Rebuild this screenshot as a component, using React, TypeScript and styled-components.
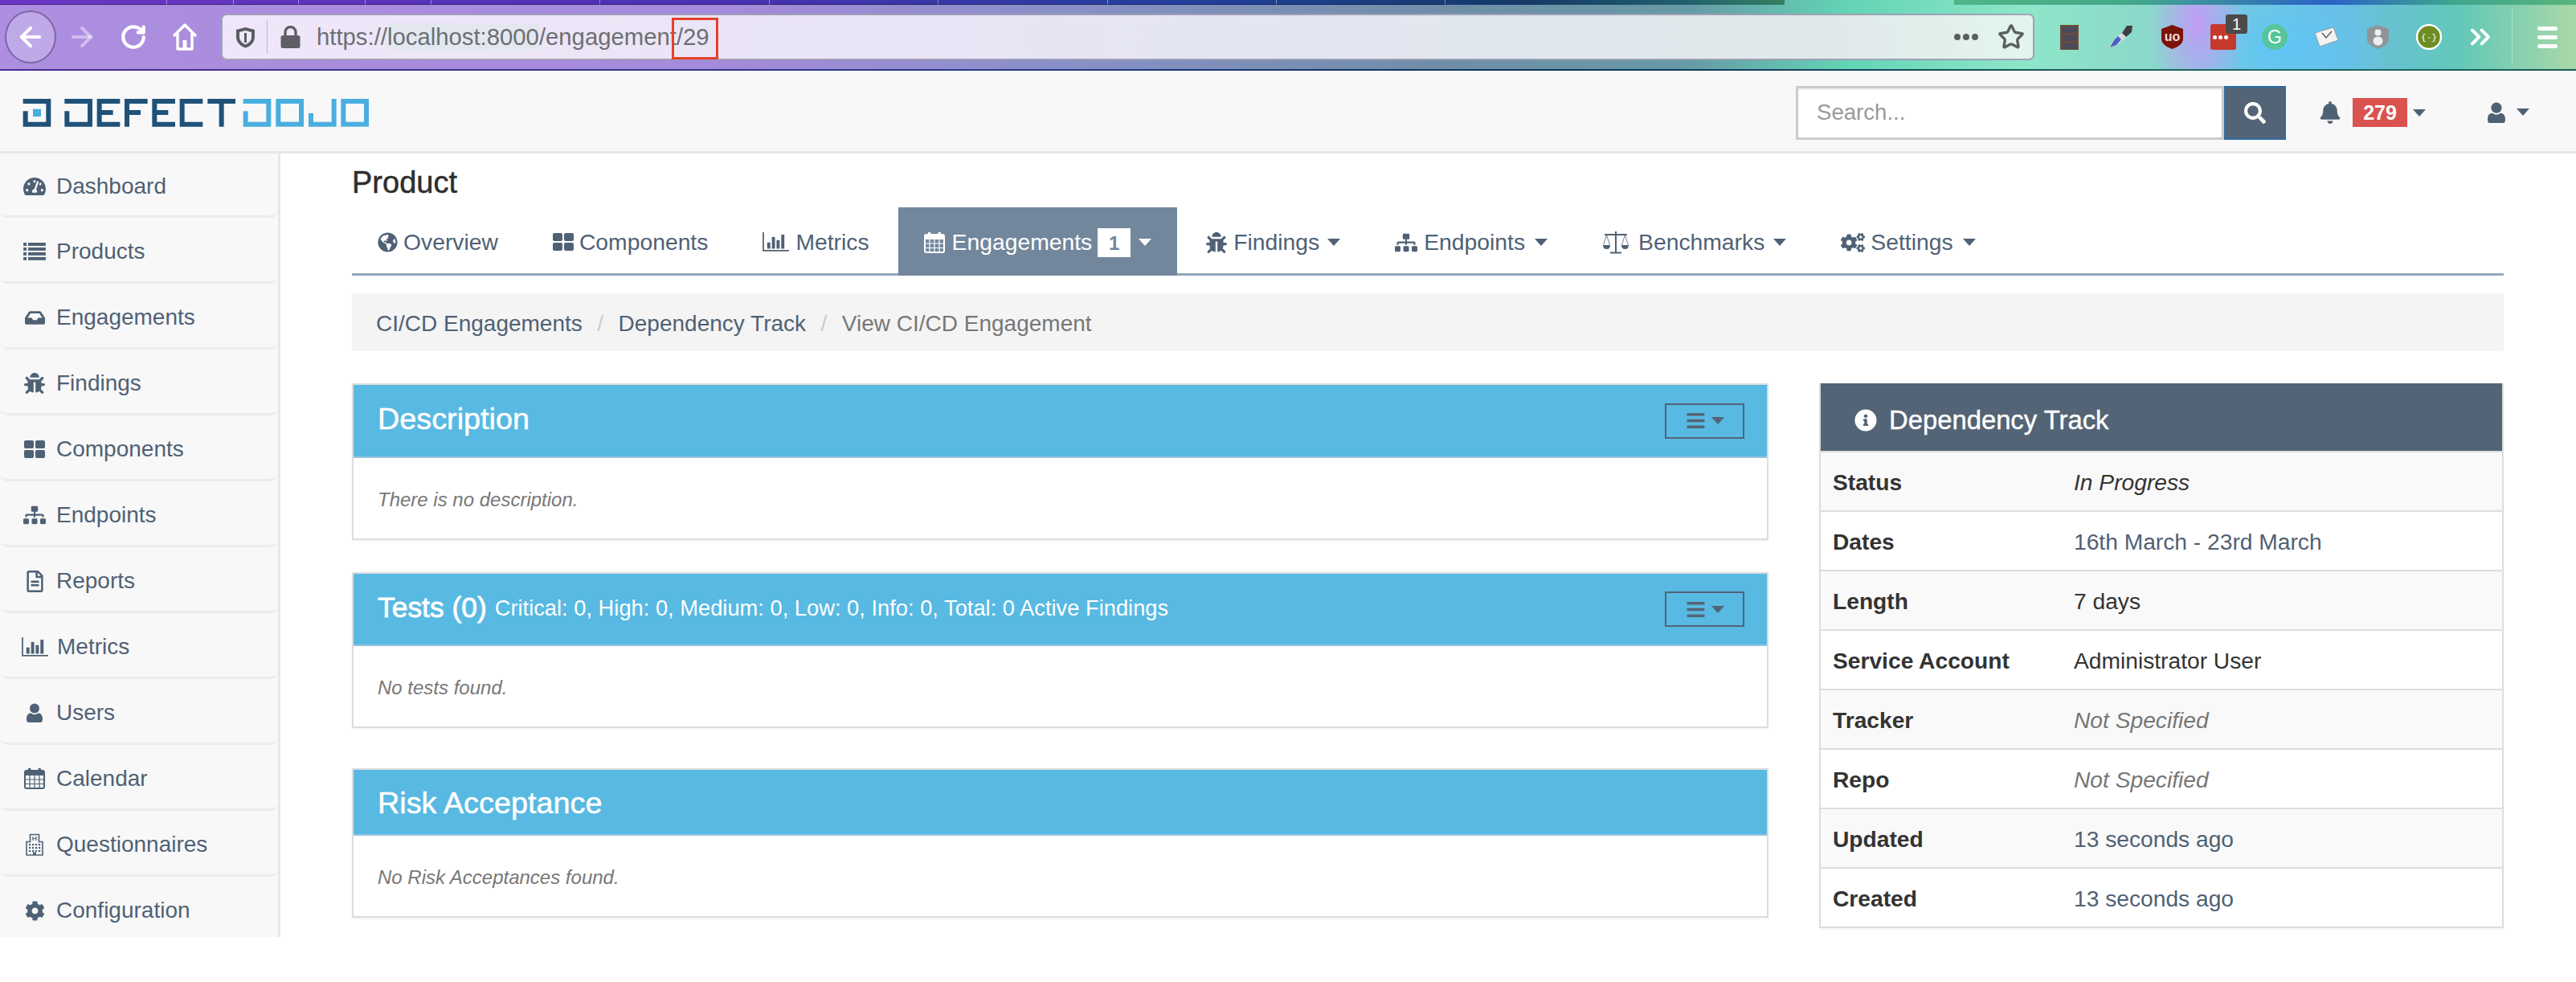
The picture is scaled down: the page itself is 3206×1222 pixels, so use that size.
import React from "react";
import styled, { createGlobalStyle } from "styled-components";
import { ArrowLeft, ArrowRight, RotateCw, Star, ChevronsRight } from "lucide-react";
import {
  FaTachometerAlt, FaInbox, FaBug, FaSitemap, FaRegFileAlt, FaCog, FaCogs,
  FaGlobeAmericas, FaInfoCircle, FaBars, FaBell, FaSearch,
} from "react-icons/fa";

const INK = "#4f6175";

const Global = createGlobalStyle`
  html, body { margin: 0; padding: 0; background: #fff; overflow: hidden; }
  body { font-family: "Liberation Sans", Arial, sans-serif; color: #333; }
  * { box-sizing: border-box; }
`;

/* ---------- drawn icons ---------- */
type P = { size?: number };
const ListIcon = ({ size = 28 }: P) => (
  <svg width={size} height={size * 0.78} viewBox="0 0 28 22" fill="currentColor">
    {[0, 6, 12, 18].map((y) => (
      <g key={y}><rect x="0" y={y} width="4" height="4" /><rect x="6" y={y} width="22" height="4" /></g>
    ))}
  </svg>
);
const ThLargeIcon = ({ size = 26 }: P) => (
  <svg width={size} height={size * 0.85} viewBox="0 0 26 22" fill="currentColor">
    <rect x="0" y="0" width="12" height="10" rx="2" /><rect x="14" y="0" width="12" height="10" rx="2" />
    <rect x="0" y="12" width="12" height="10" rx="2" /><rect x="14" y="12" width="12" height="10" rx="2" />
  </svg>
);
const BarChartIcon = ({ size = 33 }: P) => (
  <svg width={size} height={size * 0.74} viewBox="0 0 34 25" fill="currentColor">
    <path d="M1 0V23.5H34" fill="none" stroke="currentColor" strokeWidth="1.8" />
    <rect x="6" y="13" width="4" height="8" /><rect x="12" y="6" width="4" height="15" />
    <rect x="18" y="10" width="4" height="11" /><rect x="24" y="3" width="4" height="18" />
  </svg>
);
const CalendarIcon = ({ size = 26 }: P) => (
  <svg width={size} height={size * 1.04} viewBox="0 0 26 27" fill="currentColor">
    <rect x="1" y="4" width="24" height="22" rx="2" fill="none" stroke="currentColor" strokeWidth="2" />
    <rect x="1" y="4" width="24" height="6" />
    <path d="M7 10V26M13 10V26M19 10V26M1 15H25M1 20.5H25" stroke="currentColor" strokeWidth="1.2" />
    <rect x="5" y="0.5" width="3.4" height="7" rx="1.7" /><rect x="17.6" y="0.5" width="3.4" height="7" rx="1.7" />
  </svg>
);
const UserIcon = ({ size = 20 }: P) => (
  <svg width={size} height={size * 1.2} viewBox="0 0 20 24" fill="currentColor">
    <circle cx="10" cy="6.5" r="6" />
    <path d="M0 20C0 15 2 12.5 5.5 12.5Q10 16 14.5 12.5C18 12.5 20 15 20 20Q20 24 17 24H3Q0 24 0 20Z" />
  </svg>
);
const BuildingIcon = ({ size = 22 }: P) => (
  <svg width={size} height={size * 1.27} viewBox="0 0 22 28" fill="currentColor">
    <path d="M1 10.5H5.5V1.5H16.5V10.5H21V27H1Z" fill="none" stroke="currentColor" strokeWidth="1.6" />
    <path d="M9 4V9M13 4V9M9 6.5H13" stroke="currentColor" strokeWidth="1.2" fill="none" />
    {[4, 8, 12, 16].map((x) => [13, 17, 21].map((y) => <rect key={`${x}${y}`} x={x} y={y} width="2.2" height="2.2" />))}
    <rect x="9" y="23.5" width="4" height="3.5" />
  </svg>
);
const ScaleIcon = ({ size = 34 }: P) => (
  <svg width={size} height={size * 0.85} viewBox="0 0 34 29" fill="currentColor">
    <path d="M17 1V27M10 27.5H24M3 5H31" stroke="currentColor" strokeWidth="2" fill="none" />
    <path d="M5.5 5.5L1.5 18M5.5 5.5L9.5 18M28.5 5.5L24.5 18M28.5 5.5L32.5 18" stroke="currentColor" strokeWidth="0.8" fill="none" />
    <path d="M1 18H10Q10 23 5.5 23T1 18ZM24 18H33Q33 23 28.5 23T24 18Z" />
  </svg>
);
const HomeIcon = () => (
  <svg width="32" height="34" viewBox="0 0 32 34" fill="none" stroke="#fff" strokeWidth="3.4" strokeLinejoin="round">
    <path d="M2 16L16 2L30 16M7 12V32H25V12" />
    <rect x="13.5" y="21" width="5" height="11" fill="#fff" stroke="none" />
  </svg>
);
const ShieldIcon = () => (
  <svg width="25" height="27" viewBox="0 0 25 27">
    <path d="M12.5 1L24 4V13C24 20 18 25 12.5 26.5C7 25 1 20 1 13V4Z" fill="#5b5b62" />
    <path d="M12.5 5L20 7V13C20 18 16 21 12.5 22.5C9 21 5 18 5 13V7Z" fill="#eee8f8" />
    <rect x="11" y="8" width="3" height="12" fill="#5b5b62" />
  </svg>
);
const LockIcon = () => (
  <svg width="25" height="28" viewBox="0 0 25 28">
    <path d="M6 13V8A6.5 6.5 0 0 1 19 8V13" fill="none" stroke="#5f5d66" strokeWidth="3.4" />
    <rect x="0.5" y="12" width="24" height="16" rx="2.5" fill="#5f5d66" />
  </svg>
);
const ChocolateExt = () => (
  <svg width="23" height="31" viewBox="0 0 23 31">
    <rect width="23" height="31" fill="#6f4d2c" />
    {[0, 1].map((c) => [0, 1, 2].map((r) => (
      <rect key={`${c}${r}`} x={2 + c * 10} y={2 + r * 10} width="9" height="8" fill="#4c4a59" />
    )))}
  </svg>
);
const DropperExt = () => (
  <svg width="32" height="30" viewBox="0 0 32 30">
    <path d="M2 29L7 19L21 7L26 13L12 25Z" fill="#d8dadf" />
    <path d="M3 28L8 19L13 14L17 18L11 25Z" fill="#4b62c4" />
    <path d="M18 10L24 1H31L30 9L23 15Z" fill="#3f3f3f" />
  </svg>
);
const UblockExt = () => (
  <svg width="27" height="30" viewBox="0 0 27 30">
    <path d="M13.5 0L27 5V17C27 24 20 27.5 13.5 30C7 27.5 0 24 0 17V5Z" fill="#7b130b" />
    <text x="13.5" y="20" textAnchor="middle" fontSize="16" fontWeight="700" fontFamily="Liberation Sans, sans-serif" fill="#f1dcd6">uo</text>
  </svg>
);
const GrammarlyExt = () => (
  <svg width="32" height="32" viewBox="0 0 32 32">
    <circle cx="16" cy="16" r="16" fill="#57c59b" />
    <text x="16" y="24" textAnchor="middle" fontSize="23" fontFamily="Liberation Sans, sans-serif" fill="#fff">G</text>
  </svg>
);
const CardExt = () => (
  <svg width="32" height="26" viewBox="0 0 32 26">
    <path d="M2 8L25 1L31 17L8 25Z" fill="#f3f3f3" stroke="#8a8a8a" strokeWidth="0.8" />
    <path d="M11 8L16 14L23 6" fill="none" stroke="#555" strokeWidth="1.4" />
  </svg>
);
const GhostExt = () => (
  <svg width="27" height="30" viewBox="0 0 27 30">
    <path d="M13.5 0L27 5V18C27 24 20 27.5 13.5 30C7 27.5 0 24 0 18V5Z" fill="#8f9698" />
    <circle cx="13.5" cy="9.5" r="4" fill="#eee" />
    <ellipse cx="13.5" cy="20" rx="6" ry="5.5" fill="#eee" />
  </svg>
);
const GreenExt = () => (
  <svg width="32" height="32" viewBox="0 0 32 32">
    <circle cx="16" cy="16" r="15" fill="#6e8e22" stroke="#fff" strokeWidth="2.4" />
    <text x="16" y="20" textAnchor="middle" fontSize="11" fontFamily="Liberation Mono, monospace" fill="#fff">{"{·}"}</text>
  </svg>
);

/* ---------- browser chrome ---------- */
const Chrome = styled.header`
  height: 88px;
  position: relative;
  background:
    radial-gradient(ellipse 60px 110px at 2735px 30px, rgba(195, 155, 248, 0.98), transparent),
    radial-gradient(ellipse 130px 90px at 2840px 60px, #5fc6f6, transparent),
    linear-gradient(90deg, #ad8ee0 0, #a58adb 900px, #8a90c8 1300px, #6f8ea8 1800px, #669aa6 2100px, #63d4b6 2300px, #8ee6c8 2520px, #8ad8cc 2680px, #6cbde6 2900px, #63c8b8 3060px, #a9d8a8 3206px);
  border-bottom: 2px solid;
  border-image: linear-gradient(90deg, #4a2b96, #273a8c 1200px, #0f3658 1900px, #16465a 2300px, #1e6a62 2800px, #1c5a5a 3206px) 1;
`;
const TabStrip = styled.div`
  display: flex;
  height: 6px;
  background: linear-gradient(90deg, #6d36c6 0, #4a31b0 900px, #20409a 1500px, #153a66 1900px, #22606e 2100px, #36805f 2221px, transparent 2221px, transparent 2432px, #4fb587 2432px, #45a88a 2650px, #2a62c8 2900px, #3fa58f 3050px, #58b47c 3206px);
`;
const TabSliver = styled.div<{ $w: number }>`
  flex: 0 0 ${(p) => p.$w}px;
  border-right: 1px solid rgba(255, 255, 255, 0.4);
  border-bottom: 1px solid rgba(10, 10, 50, 0.45);
`;
const ToolRow = styled.div`
  display: flex;
  align-items: center;
  height: 80px;
  padding: 0 0 0 6px;
`;
const NavCell = styled.div<{ $circle?: boolean; $dim?: boolean }>`
  flex: 0 0 64px;
  height: 66px;
  display: flex;
  align-items: center;
  justify-content: center;
  color: ${(p) => (p.$dim ? "rgba(255,255,255,.42)" : "#fff")};
  ${(p) => p.$circle && "border-radius: 50%; background: rgba(255,255,255,.24); border: 2px solid rgba(70,50,120,.55);"}
`;
const AddressBar = styled.div`
  margin-left: 13px;
  flex: 0 0 2257px;
  height: 58px;
  display: flex;
  align-items: center;
  border: 2px solid rgba(60, 60, 100, 0.42);
  border-radius: 7px;
  background: linear-gradient(90deg, #efe7f9 0, #e8e4f5 900px, #e2e7f0 1500px, #e0e9ea 2000px, #e3f5ee 2257px);
  padding-left: 16px;
  color: #5b5b62;
`;
const BarDivider = styled.span`
  width: 1px;
  height: 42px;
  background: rgba(90, 90, 100, 0.35);
  margin: 0 16px 0 14px;
`;
const Url = styled.span`
  margin-left: 20px;
  font-size: 29.3px;
  color: #6e6e72;
  white-space: nowrap;
`;
const UrlHost = styled.span`
  background: #e3e8f0;
`;
const UrlMarked = styled.span`
  position: relative;
  &::after {
    content: "";
    position: absolute;
    left: -6px;
    right: -11px;
    top: -7px;
    bottom: -12px;
    border: 3px solid #e6402a;
  }
`;
const BarEnd = styled.div`
  margin-left: auto;
  display: flex;
  align-items: center;
  gap: 24px;
  padding-right: 10px;
  color: #5b5f5e;
`;
const MoreDots = styled.span`
  display: flex;
  gap: 3px;
  & > i { width: 8px; height: 8px; border-radius: 50%; background: #5b5f5e; display: block; }
`;
const ExtRow = styled.div`
  margin-left: 11px;
  display: flex;
  align-items: center;
`;
const ExtCell = styled.div`
  position: relative;
  flex: 0 0 64px;
  display: flex;
  justify-content: center;
  align-items: center;
  height: 66px;
  color: #fff;
`;
const PassIcon = styled.div`
  width: 32px;
  height: 32px;
  border-radius: 3px;
  background: #c6392d;
  display: flex;
  align-items: center;
  gap: 2px;
  padding: 0 3px;
  & > i { display: block; width: 5px; height: 5px; border-radius: 50%; background: #fff; }
`;
const ExtBadge = styled.span`
  position: absolute;
  top: 5px;
  left: 35px;
  width: 27px;
  height: 24px;
  background: #4b4b4b;
  border-radius: 3px;
  color: #fff;
  font-size: 20px;
  line-height: 24px;
  text-align: center;
`;
const ChromeDivider = styled.span`
  margin-left: 7px;
  width: 1px;
  height: 68px;
  background: rgba(255, 255, 255, 0.35);
`;
const MenuBars = styled.div`
  margin-left: 31px;
  width: 25px;
  display: flex;
  flex-direction: column;
  gap: 6px;
  & > i { display: block; height: 5px; border-radius: 3px; background: #fff; }
`;

/* ---------- app navbar ---------- */
const TopNav = styled.nav`
  height: 103px;
  display: flex;
  align-items: center;
  padding: 4px 0 0 20px;
  background: #f8f8f8;
  border-bottom: 3px solid #e7e7e7;
`;
const Logo = styled.svg`
  width: 450px;
  height: 50px;
  display: block;
`;
const SearchGroup = styled.div`
  margin-left: auto;
  display: flex;
  height: 67px;
`;
const SearchInput = styled.input`
  width: 533px;
  height: 67px;
  border: 3px solid #ccc;
  border-radius: 0;
  background: #fff;
  padding: 0 23px;
  font: 400 27.6px "Liberation Sans", Arial, sans-serif;
  box-shadow: inset 0 2px 2px rgba(0, 0, 0, 0.07);
  &::placeholder { color: #999; opacity: 1; }
`;
const SearchButton = styled.button`
  width: 77px;
  height: 67px;
  border: 2px solid #2e6da4;
  background: #536476;
  color: #fff;
  display: flex;
  align-items: center;
  justify-content: center;
  padding: 0;
`;
const BellGroup = styled.div`
  margin-left: 41px;
  display: flex;
  align-items: center;
  color: ${INK};
`;
const CountBadge = styled.span`
  margin-left: 14px;
  width: 68px;
  height: 36px;
  background: #d9534f;
  color: #fff;
  font-size: 25px;
  font-weight: 700;
  line-height: 36px;
  text-align: center;
`;
const Caret = styled.span<{ $light?: boolean; $gap?: number }>`
  display: inline-block;
  margin-left: ${(p) => p.$gap ?? 10}px;
  width: 0;
  height: 0;
  border-left: 8px solid transparent;
  border-right: 8px solid transparent;
  border-top: 9px solid ${(p) => (p.$light ? "#fff" : INK)};
`;
const UserGroup = styled.div`
  margin: 0 58px 0 77px;
  display: flex;
  align-items: center;
  color: ${INK};
`;

/* ---------- sidebar ---------- */
const Body = styled.div`
  display: flex;
  align-items: flex-start;
`;
const Sidebar = styled.aside`
  flex: 0 0 349px;
  height: 975px;
  overflow: hidden;
  background: #f8f8f8;
  border-right: 3px solid #e7e7e7;
`;
const SideRow = styled.div`
  height: 82px;
  display: flex;
  align-items: center;
  padding: 5px 0 0 27px;
  border-bottom: 3px solid #ececec;
  border-radius: 0 0 9px 9px;
  color: ${INK};
  font-size: 28px;
  &:first-child { height: 80px; }
`;
const SideIcon = styled.span`
  flex: 0 0 32px;
  display: flex;
  justify-content: center;
  margin-right: 11px;
`;

/* ---------- main ---------- */
const Main = styled.main`
  flex: 1;
  min-width: 0;
  padding: 0 90px 0 89px;
`;
const PageTitle = styled.h3`
  margin: 0;
  height: 67px;
  font-size: 38px;
  font-weight: 400;
  line-height: 72px;
  color: #2e2e2e;
  -webkit-text-stroke: 0.5px #2e2e2e;
`;
const Tabs = styled.div`
  height: 85px;
  display: flex;
  border-bottom: 3px solid #94a8b8;
`;
const Tab = styled.div<{ $active?: boolean }>`
  display: flex;
  align-items: center;
  height: 85px;
  padding: 2px 32px 0;
  margin-right: 4px;
  font-size: 28.3px;
  white-space: nowrap;
  color: ${(p) => (p.$active ? "#fff" : INK)};
  background: ${(p) => (p.$active ? "#73879c" : "transparent")};
`;
const TabIcon = styled.span<{ $w: number }>`
  flex: 0 0 ${(p) => p.$w}px;
  margin-right: 7px;
  display: flex;
  align-items: center;
`;
const TabCount = styled.span`
  margin-left: 7px;
  width: 41px;
  height: 36px;
  background: #fff;
  color: #73879c;
  font-size: 24px;
  font-weight: 700;
  line-height: 38px;
  text-align: center;
`;
const Breadcrumb = styled.div`
  margin-top: 22px;
  height: 72px;
  display: flex;
  align-items: center;
  padding: 3px 30px 0;
  background: #f4f4f4;
  font-size: 28px;
  color: ${INK};
`;
const CrumbSep = styled.span`
  color: #ccc;
  padding: 0 18.5px;
`;
const CrumbCurrent = styled.span`
  color: #777;
`;
const Columns = styled.div`
  margin-top: 40px;
  display: grid;
  grid-template-columns: 1763px 852px;
  column-gap: 63px;
  align-items: start;
`;
const Stack = styled.div`
  display: flex;
  flex-direction: column;
`;
const Panel = styled.section<{ $gap?: number }>`
  margin-bottom: ${(p) => p.$gap ?? 40}px;
  border: 2px solid #ddd;
  box-shadow: 0 2px 2px rgba(0, 0, 0, 0.04);
`;
const PanelHead = styled.div<{ $h: number; $pb?: number; $pt?: number }>`
  height: ${(p) => p.$h}px;
  display: flex;
  align-items: center;
  padding: ${(p) => p.$pt ?? 0}px 28px ${(p) => p.$pb ?? 0}px 30px;
  background: #58b9e2;
  border-bottom: 2px solid #9bc3de;
  color: #fff;
`;
const PanelTitle = styled.h4<{ $compact?: boolean }>`
  margin: 0;
  font-size: ${(p) => (p.$compact ? 35.4 : 37.8)}px;
  font-weight: 400;
  -webkit-text-stroke: ${(p) => (p.$compact ? 0.8 : 0.5)}px #fff;
`;
const PanelNote = styled.span`
  margin-left: 10px;
  font-size: 27.3px;
`;
const MenuButton = styled.div`
  width: 99px;
  height: 44px;
  display: flex;
  align-items: center;
  justify-content: center;
  border: 2px solid #536476;
  color: #536476;
`;
const MenuSlot = styled.div<{ $up: number }>`
  margin-left: auto;
  display: flex;
  margin-top: ${(p) => p.$up}px;
`;
const PanelBody = styled.div`
  height: 100px;
  display: flex;
  align-items: center;
  padding: 3px 30px 0;
  font-size: 24px;
  font-style: italic;
  color: #777;
  background: #fff;
`;
const InfoPanel = styled.section`
  border: 2px solid #ddd;
  border-top: none;
  box-shadow: 0 2px 2px rgba(0, 0, 0, 0.04);
`;
const InfoHead = styled.h4`
  margin: 0;
  height: 84px;
  display: flex;
  align-items: center;
  gap: 15px;
  padding: 8px 0 0 42px;
  background: #536476;
  color: #fff;
  font-size: 32.8px;
  font-weight: 400;
  -webkit-text-stroke: 0.4px #fff;
`;
const InfoRow = styled.div`
  height: 74px;
  display: flex;
  align-items: center;
  padding: 3px 0 0 15px;
  font-size: 28.2px;
  border-top: 2px solid #ddd;
  &:nth-of-type(odd) { background: #f9f9f9; }
  &:nth-of-type(even) { background: #fff; }
`;
const InfoLabel = styled.strong`
  flex: 0 0 300px;
  color: #333;
`;
const InfoValue = styled.span<{ $tone?: "link" | "muted" | "plain"; $em?: boolean }>`
  color: ${(p) => (p.$tone === "link" ? INK : p.$tone === "muted" ? "#777" : "#333")};
  font-style: ${(p) => (p.$em ? "italic" : "normal")};
`;

/* ---------- data ---------- */
const sideItems: [React.ReactNode, string][] = [
  [<FaTachometerAlt size={28} />, "Dashboard"],
  [<ListIcon />, "Products"],
  [<FaInbox size={25} />, "Engagements"],
  [<FaBug size={26} />, "Findings"],
  [<ThLargeIcon />, "Components"],
  [<FaSitemap size={28} />, "Endpoints"],
  [<FaRegFileAlt size={27} />, "Reports"],
  [<BarChartIcon />, "Metrics"],
  [<UserIcon />, "Users"],
  [<CalendarIcon />, "Calendar"],
  [<BuildingIcon />, "Questionnaires"],
  [<FaCog size={25} />, "Configuration"],
];
const infoRows: [string, string, "link" | "muted" | "plain", boolean][] = [
  ["Status", "In Progress", "plain", true],
  ["Dates", "16th March - 23rd March", "link", false],
  ["Length", "7 days", "plain", false],
  ["Service Account", "Administrator User", "plain", false],
  ["Tracker", "Not Specified", "muted", true],
  ["Repo", "Not Specified", "muted", true],
  ["Updated", "13 seconds ago", "link", false],
  ["Created", "13 seconds ago", "link", false],
];
const slivers = [208, 83, 81, 83, 82, 210, 211, 210, 211, 210, 210];

const LogoMark = () => (
  <Logo viewBox="0 0 1350 150" fill="none" strokeWidth="18">
    <g stroke="#1f5279">
      <path d="M35 70V119H121V33H26" />
      <path d="M190 70V119H276V33H181" />
      <path d="M388 33H311V119H388M311 75H362" />
      <path d="M491 33H414V128M414 75H465" />
      <path d="M594 33H517V119H594M517 75H568" />
      <path d="M697 33H620V119H697" />
      <path d="M715 33H819M767 33V128" />
    </g>
    <rect x="63" y="62" width="30" height="28" fill="#4aaee0" />
    <g stroke="#4aaee0">
      <path d="M857 70V119H943V33H848" />
      <rect x="979" y="33" width="86" height="86" />
      <path d="M1101 78V119H1187V24" />
      <rect x="1222" y="33" width="86" height="86" />
    </g>
  </Logo>
);

const PanelMenu = ({ up }: { up: number }) => (
  <MenuSlot $up={up}>
    <MenuButton>
      <FaBars size={25} />
      <Caret $gap={7} style={{ borderTopColor: "#536476" }} />
    </MenuButton>
  </MenuSlot>
);

export default function App() {
  return (
    <>
      <Global />
      <Chrome>
        <TabStrip>
          {slivers.map((w, i) => <TabSliver key={i} $w={w} />)}
        </TabStrip>
        <ToolRow>
          <NavCell $circle><ArrowLeft size={38} strokeWidth={2.6} /></NavCell>
          <NavCell $dim><ArrowRight size={38} strokeWidth={2.6} /></NavCell>
          <NavCell><RotateCw size={34} strokeWidth={3} /></NavCell>
          <NavCell><HomeIcon /></NavCell>
          <AddressBar>
            <ShieldIcon />
            <BarDivider />
            <LockIcon />
            <Url>
              https://<UrlHost>localhost:8000</UrlHost>/engagement<UrlMarked>/29</UrlMarked>
            </Url>
            <BarEnd>
              <MoreDots><i /><i /><i /></MoreDots>
              <Star size={34} strokeWidth={2.4} />
            </BarEnd>
          </AddressBar>
          <ExtRow>
            <ExtCell><ChocolateExt /></ExtCell>
            <ExtCell><DropperExt /></ExtCell>
            <ExtCell><UblockExt /></ExtCell>
            <ExtCell><PassIcon><i /><i /><i /></PassIcon><ExtBadge>1</ExtBadge></ExtCell>
            <ExtCell><GrammarlyExt /></ExtCell>
            <ExtCell><CardExt /></ExtCell>
            <ExtCell><GhostExt /></ExtCell>
            <ExtCell><GreenExt /></ExtCell>
            <ExtCell><ChevronsRight size={40} strokeWidth={2.4} /></ExtCell>
          </ExtRow>
          <ChromeDivider />
          <MenuBars><i /><i /><i /></MenuBars>
        </ToolRow>
      </Chrome>

      <TopNav>
        <LogoMark />
        <SearchGroup>
          <SearchInput placeholder="Search..." />
          <SearchButton><FaSearch size={27} /></SearchButton>
        </SearchGroup>
        <BellGroup>
          <FaBell size={28} />
          <CountBadge>279</CountBadge>
          <Caret $gap={7} />
        </BellGroup>
        <UserGroup>
          <UserIcon size={22} />
          <Caret $gap={14} />
        </UserGroup>
      </TopNav>

      <Body>
        <Sidebar>
          {sideItems.map(([icon, label]) => (
            <SideRow key={label}><SideIcon>{icon}</SideIcon>{label}</SideRow>
          ))}
        </Sidebar>
        <Main>
          <PageTitle>Product</PageTitle>
          <Tabs>
            <Tab><TabIcon $w={25}><FaGlobeAmericas size={25} /></TabIcon>Overview</Tab>
            <Tab><TabIcon $w={26}><ThLargeIcon /></TabIcon>Components</Tab>
            <Tab><TabIcon $w={34}><BarChartIcon /></TabIcon>Metrics</Tab>
            <Tab $active>
              <TabIcon $w={28}><CalendarIcon /></TabIcon>Engagements
              <TabCount>1</TabCount><Caret $light $gap={10} />
            </Tab>
            <Tab><TabIcon $w={27}><FaBug size={26} /></TabIcon>Findings<Caret /></Tab>
            <Tab><TabIcon $w={29}><FaSitemap size={28} /></TabIcon>Endpoints<Caret $gap={12} /></Tab>
            <Tab><TabIcon $w={38}><ScaleIcon /></TabIcon>Benchmarks<Caret $gap={11} /></Tab>
            <Tab><TabIcon $w={29}><FaCogs size={30} /></TabIcon>Settings<Caret $gap={12} /></Tab>
          </Tabs>
          <Breadcrumb>
            CI/CD Engagements<CrumbSep>/</CrumbSep>Dependency Track<CrumbSep>/</CrumbSep>
            <CrumbCurrent>View CI/CD Engagement</CrumbCurrent>
          </Breadcrumb>
          <Columns>
            <Stack>
              <Panel>
                <PanelHead $h={91} $pb={5}><PanelTitle>Description</PanelTitle><PanelMenu up={5} /></PanelHead>
                <PanelBody>There is no description.</PanelBody>
              </Panel>
              <Panel $gap={50}>
                <PanelHead $h={90} $pb={3}>
                  <PanelTitle $compact>Tests (0)</PanelTitle>
                  <PanelNote>Critical: 0, High: 0, Medium: 0, Low: 0, Info: 0, Total: 0 Active Findings</PanelNote>
                  <PanelMenu up={3} />
                </PanelHead>
                <PanelBody>No tests found.</PanelBody>
              </Panel>
              <Panel>
                <PanelHead $h={82} $pt={3}><PanelTitle>Risk Acceptance</PanelTitle></PanelHead>
                <PanelBody>No Risk Acceptances found.</PanelBody>
              </Panel>
            </Stack>
            <InfoPanel>
              <InfoHead><FaInfoCircle size={28} />Dependency Track</InfoHead>
              {infoRows.map(([label, value, tone, em]) => (
                <InfoRow key={label}>
                  <InfoLabel>{label}</InfoLabel>
                  <InfoValue $tone={tone} $em={em}>{value}</InfoValue>
                </InfoRow>
              ))}
            </InfoPanel>
          </Columns>
        </Main>
      </Body>
    </>
  );
}
